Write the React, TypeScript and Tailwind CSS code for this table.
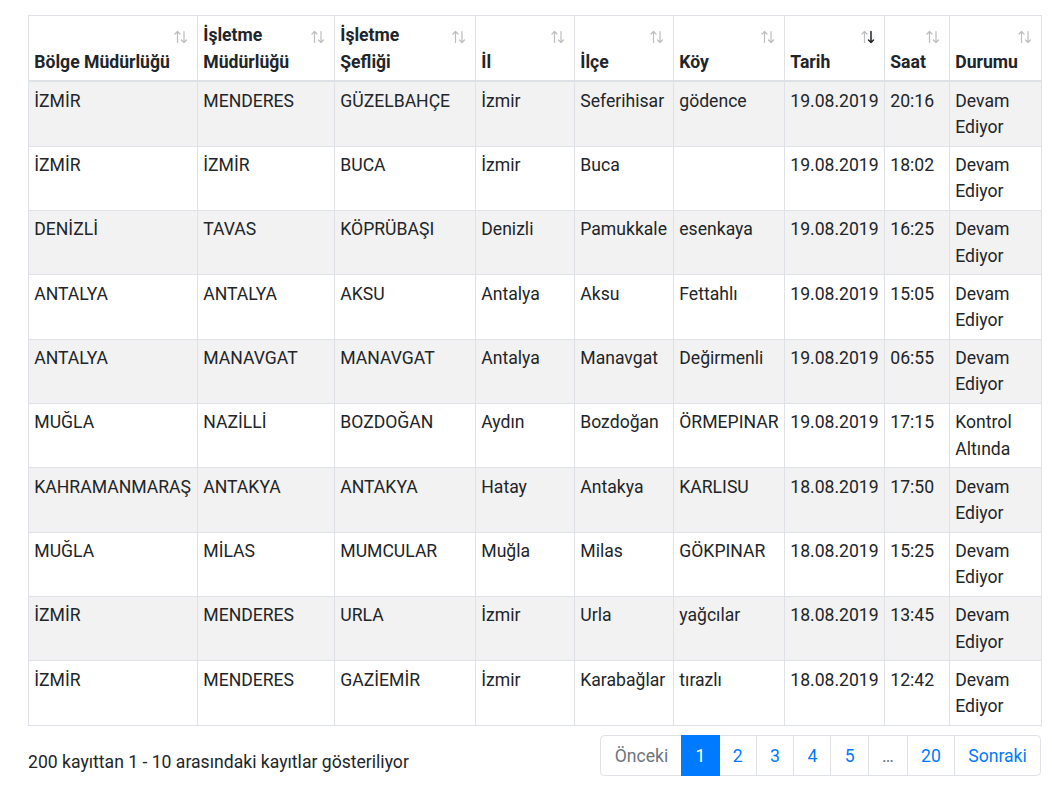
import React from 'react';

type Row = string[];

const rows: Row[] = [
  ['İZMİR', 'MENDERES', 'GÜZELBAHÇE', 'İzmir', 'Seferihisar', 'gödence', '19.08.2019', '20:16', 'Devam|Ediyor'],
  ['İZMİR', 'İZMİR', 'BUCA', 'İzmir', 'Buca', '', '19.08.2019', '18:02', 'Devam|Ediyor'],
  ['DENİZLİ', 'TAVAS', 'KÖPRÜBAŞI', 'Denizli', 'Pamukkale', 'esenkaya', '19.08.2019', '16:25', 'Devam|Ediyor'],
  ['ANTALYA', 'ANTALYA', 'AKSU', 'Antalya', 'Aksu', 'Fettahlı', '19.08.2019', '15:05', 'Devam|Ediyor'],
  ['ANTALYA', 'MANAVGAT', 'MANAVGAT', 'Antalya', 'Manavgat', 'Değirmenli', '19.08.2019', '06:55', 'Devam|Ediyor'],
  ['MUĞLA', 'NAZİLLİ', 'BOZDOĞAN', 'Aydın', 'Bozdoğan', 'ÖRMEPINAR', '19.08.2019', '17:15', 'Kontrol|Altında'],
  ['KAHRAMANMARAŞ', 'ANTAKYA', 'ANTAKYA', 'Hatay', 'Antakya', 'KARLISU', '18.08.2019', '17:50', 'Devam|Ediyor'],
  ['MUĞLA', 'MİLAS', 'MUMCULAR', 'Muğla', 'Milas', 'GÖKPINAR', '18.08.2019', '15:25', 'Devam|Ediyor'],
  ['İZMİR', 'MENDERES', 'URLA', 'İzmir', 'Urla', 'yağcılar', '18.08.2019', '13:45', 'Devam|Ediyor'],
  ['İZMİR', 'MENDERES', 'GAZİEMİR', 'İzmir', 'Karabağlar', 'tırazlı', '18.08.2019', '12:42', 'Devam|Ediyor'],
];

const columns: { label: string[]; width: string; active?: boolean }[] = [
  { label: ['Bölge Müdürlüğü'], width: 'w-[169px]' },
  { label: ['İşletme', 'Müdürlüğü'], width: 'w-[137px]' },
  { label: ['İşletme', 'Şefliği'], width: 'w-[141px]' },
  { label: ['İl'], width: 'w-[99px]' },
  { label: ['İlçe'], width: 'w-[99px]' },
  { label: ['Köy'], width: 'w-[111px]' },
  { label: ['Tarih'], width: 'w-[100px]', active: true },
  { label: ['Saat'], width: 'w-[65px]' },
  { label: ['Durumu'], width: 'w-[92px]' },
];

function SortIcon({ active }: { active?: boolean }) {
  return (
    <svg
      width="14"
      height="14"
      viewBox="0 0 14 14"
      fill="none"
      strokeLinecap="round"
      strokeLinejoin="round"
      className="absolute right-[9px] top-[14px]"
    >
      <g stroke="#212529" strokeOpacity="0.3" strokeWidth="1.2">
        <path d="M3.5 12.5V1.5M1 4l2.5-2.5L6 4" />
      </g>
      <g stroke="#212529" strokeOpacity={active ? 1 : 0.3} strokeWidth={active ? 1.5 : 1.2}>
        <path d="M10 1.5v11M7.5 10l2.5 2.5 2.5-2.5" />
      </g>
    </svg>
  );
}

const pages = ['Önceki', '1', '2', '3', '4', '5', '…', '20', 'Sonraki'];

export default function App() {
  return (
    <div className="min-h-screen bg-white text-[#212529] font-['Roboto','Liberation_Sans',sans-serif] text-[17.6px] leading-[26.4px]">
      <div className="ml-[28px] w-[1013px] pt-[15px]">
        <table className="w-[1013px] table-fixed border-collapse border border-[#dee2e6]">
          <thead>
            <tr>
              {columns.map((c, i) => (
                <th
                  key={i}
                  className={`${c.width} relative border border-b-2 border-[#dee2e6] bg-white pt-[6.28px] pb-[5.28px] pl-[5.28px] pr-[20px] text-left align-bottom font-bold`}
                >
                  <SortIcon active={c.active} />
                  {c.label.map((l, j) => (
                    <div key={j} className="whitespace-nowrap">
                      {l}
                    </div>
                  ))}
                </th>
              ))}
            </tr>
          </thead>
          <tbody>
            {rows.map((r, i) => (
              <tr key={i} className={i % 2 === 0 ? 'bg-[#f2f2f2]' : 'bg-white'}>
                {r.map((cell, j) => (
                  <td
                    key={j}
                    className="h-[64.3px] border border-[#dee2e6] p-[5.28px] align-top whitespace-nowrap"
                  >
                    {cell.split('|').map((l, k) => (
                      <div key={k}>{l}</div>
                    ))}
                  </td>
                ))}
              </tr>
            ))}
          </tbody>
        </table>

        <div className="mt-[9px] flex items-start justify-between">
          <div className="pt-[14px] text-[#212529]">200 kayıttan 1 - 10 arasındaki kayıtlar gösteriliyor</div>
          <ul className="flex">
            {pages.map((p, i) => {
              const first = i === 0;
              const last = i === pages.length - 1;
              const active = p === '1';
              const muted = p === 'Önceki' || p === '…';
              return (
                <li
                  key={i}
                  className={`${first ? 'rounded-l-[4.4px]' : '-ml-px'} ${last ? 'rounded-r-[4.4px]' : ''} ${
                    active
                      ? 'z-10 border-[#007bff] bg-[#007bff] text-white'
                      : muted
                        ? 'border-[#dee2e6] bg-white text-[#6c757d]'
                        : 'border-[#dee2e6] bg-white text-[#007bff]'
                  } border px-[13.2px] py-[8.8px] leading-[22px]`}
                >
                  {p}
                </li>
              );
            })}
          </ul>
        </div>
      </div>
    </div>
  );
}
